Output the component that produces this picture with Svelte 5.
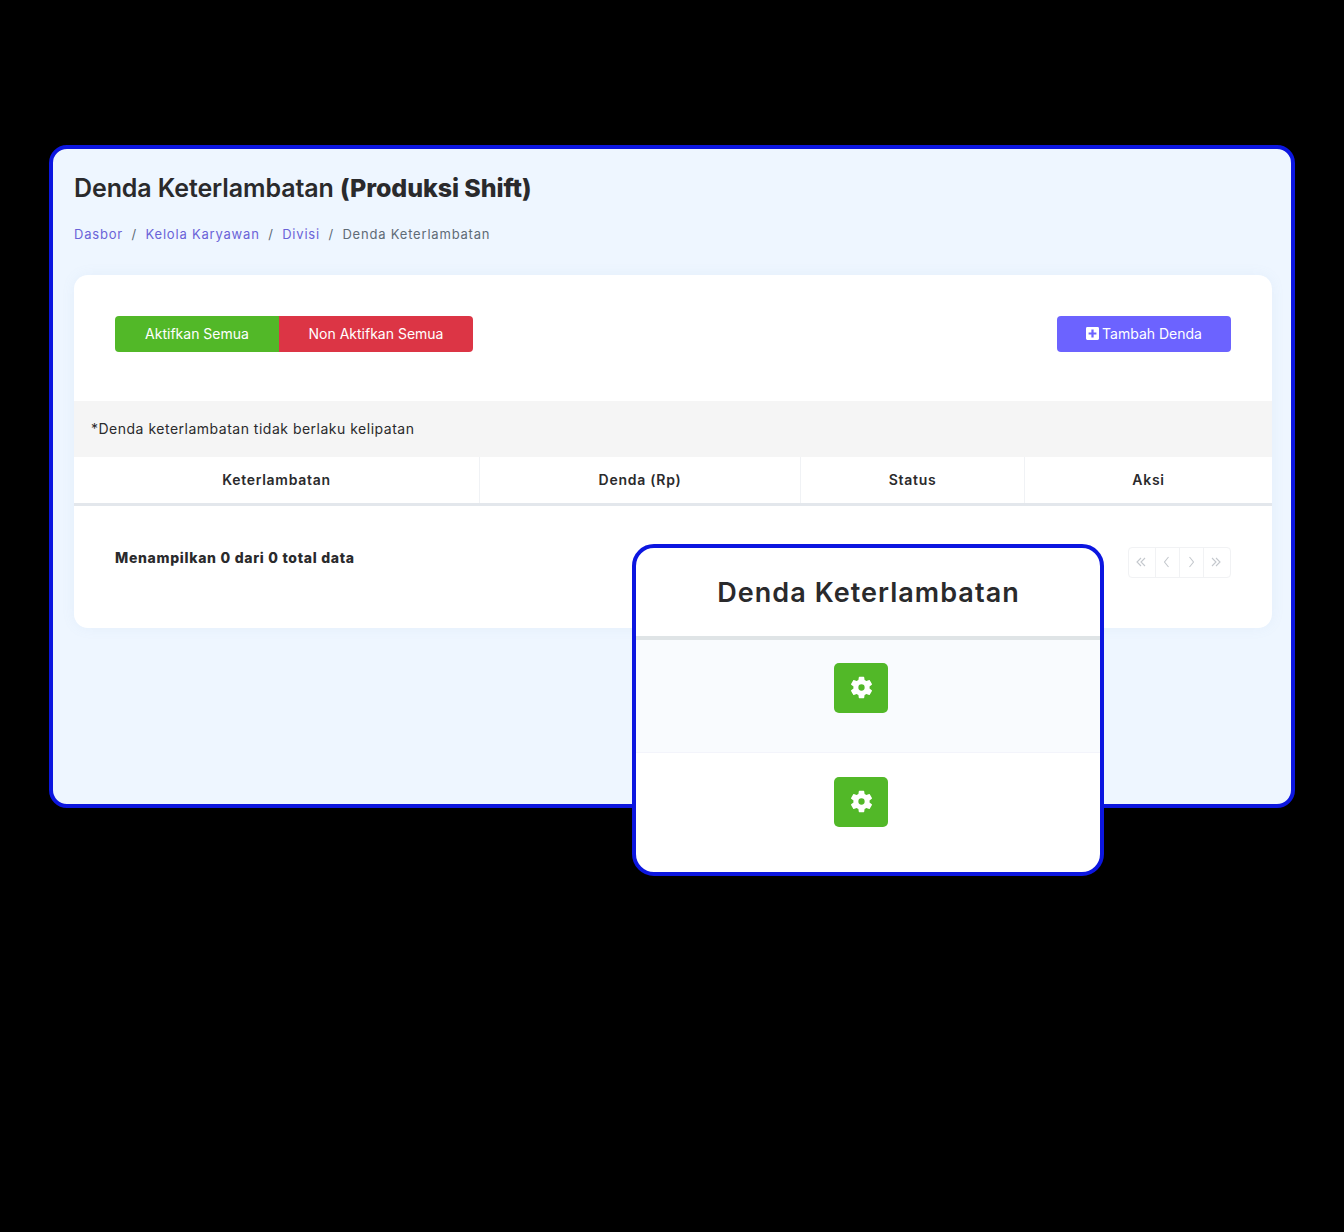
<script>
  const columns = ['Keterlambatan', 'Denda (Rp)', 'Status', 'Aksi'];
  const crumbs = ['Kelola Karyawan', 'Divisi'];
  const pages = [
    'M7 2 3 6l4 4M11 2 7 6l4 4',
    'M8.500 1 4.500 6l4 5',
    'M5.500 1l4 5-4 5',
    'M3 2l4 4-4 4M7 2l4 4-4 4'
  ];
  const gear = 'M19.14 12.94c.04-.3.06-.61.06-.94s-.02-.64-.07-.94l2.03-1.58a.5.5 0 0 0 .12-.61l-1.92-3.32a.5.5 0 0 0-.59-.22l-2.39.96a7 7 0 0 0-1.62-.94l-.36-2.54a.48.48 0 0 0-.48-.41h-3.84a.48.48 0 0 0-.47.41l-.36 2.54c-.59.24-1.13.57-1.62.94l-2.39-.96a.49.49 0 0 0-.59.22L2.74 8.87a.48.48 0 0 0 .12.61l2.03 1.58c-.05.3-.09.63-.09.94s.02.64.07.94l-2.03 1.58a.5.5 0 0 0-.12.61l1.92 3.32c.12.22.37.29.59.22l2.39-.96c.5.38 1.03.7 1.62.94l.36 2.54c.05.24.24.41.48.41h3.84c.24 0 .44-.17.47-.41l.36-2.54c.59-.24 1.13-.56 1.62-.94l2.39.96c.22.08.47 0 .59-.22l1.92-3.32a.48.48 0 0 0-.12-.61l-2.01-1.58zM12 14.800a2.800 2.800 0 1 1 0-5.600 2.800 2.800 0 0 1 0 5.600z';
</script>

<div class="stage">
  <section class="panel">
    <h1>Denda Keterlambatan <b>(Produksi Shift)</b></h1>
    <nav class="crumbs">
      <a href="#top">Dasbor</a>
      {#each crumbs as c}
        <span class="sep">/</span>
        <a href="#top">{c}</a>
      {/each}
      <span class="sep">/</span>
      <span class="current">Denda Keterlambatan</span>
    </nav>

    <div class="card">
      <div class="toolbar">
        <div class="group">
          <button class="btn green">Aktifkan Semua</button>
          <button class="btn red">Non Aktifkan Semua</button>
        </div>
        <button class="btn purple">
          <svg viewBox="0 0 14 14" width="13" height="13" aria-hidden="true">
            <path fill="#fff" fill-rule="evenodd" d="M1.500 0h11A1.500 1.500 0 0 1 14 1.500v11a1.500 1.500 0 0 1-1.500 1.500h-11A1.500 1.500 0 0 1 0 12.500v-11A1.500 1.500 0 0 1 1.500 0zM5.800 2.800v3h-3v2.400h3v3h2.400v-3h3V5.800h-3v-3z" />
          </svg>
          Tambah Denda
        </button>
      </div>

      <p class="note">*Denda keterlambatan tidak berlaku kelipatan</p>

      <div class="thead">
        {#each columns as col}
          <div class="th">{col}</div>
        {/each}
      </div>

      <div class="foot">
        <strong>Menampilkan 0 dari 0 total data</strong>
        <div class="pager">
          {#each pages as d}
            <span>
              <svg viewBox="0 0 14 12" width="14" height="12" aria-hidden="true"><path d={d} fill="none" stroke="#c4c8cd" stroke-width="1.100" /></svg>
            </span>
          {/each}
        </div>
      </div>
    </div>
  </section>

  <section class="popout">
    <h2>Denda Keterlambatan</h2>
    <div class="row tinted">
      <button class="gear" aria-label="Pengaturan">
        <svg viewBox="0 0 24 24" width="27" height="27" aria-hidden="true"><path fill="#fff" d={gear} /></svg>
      </button>
    </div>
    <div class="row second">
      <button class="gear" aria-label="Pengaturan">
        <svg viewBox="0 0 24 24" width="27" height="27" aria-hidden="true"><path fill="#fff" d={gear} /></svg>
      </button>
    </div>
  </section>
</div>

<style>
  :global(body) {
    background: #000;
  }

  .stage {
    position: relative;
    box-sizing: border-box;
    height: 1232px;
    padding: 145px 49px 0;
    font-family: Inter, "Noto Sans", sans-serif;
    color: #2a2a2c;
  }

  .panel {
    box-sizing: border-box;
    height: 663px;
    padding: 23px 19px 0 21px;
    background: #eef6ff;
    border: 4px solid #0c16e0;
    border-radius: 18px;
  }

  h1 {
    margin: 0;
    font-size: 25px;
    line-height: 32px;
    font-weight: 600;
    letter-spacing: -0.1px;
  }

  h1 b {
    font-weight: 800;
  }

  .crumbs {
    display: flex;
    gap: 8.500px;
    margin-top: 20px;
    height: 20px;
    align-items: center;
    font-size: 13px;
    letter-spacing: 0.8px;
  }

  .crumbs a {
    color: #6a63d8;
    text-decoration: none;
  }

  .sep, .current {
    color: #5f6b76;
  }

  .card {
    margin-top: 31px;
    height: 353px;
    background: #fff;
    border-radius: 14px;
    box-shadow: 0 0 14px rgba(120, 150, 200, 0.08);
    overflow: hidden;
  }

  .toolbar {
    display: flex;
    justify-content: space-between;
    padding: 41px 41px 49px;
  }

  .group {
    display: flex;
  }

  .btn {
    height: 36px;
    border: 0;
    padding: 0 0 2px;
    color: #fff;
    font: 400 14px Inter, "Noto Sans", sans-serif;
  }

  .green {
    width: 164px;
    background: #52b828;
    border-radius: 4px 0 0 4px;
  }

  .red {
    width: 194px;
    background: #dc3545;
    border-radius: 0 4px 4px 0;
  }

  .purple {
    width: 174px;
    display: flex;
    align-items: center;
    justify-content: center;
    gap: 3px;
    background: #6c63ff;
    border-radius: 4px;
  }

  .note {
    margin: 0;
    height: 56px;
    box-sizing: border-box;
    padding: 0 0 1px 17px;
    display: flex;
    align-items: center;
    background: #f5f5f5;
    font-size: 14px;
    letter-spacing: 0.5px;
  }

  .thead {
    display: grid;
    grid-template-columns: 406px 321px 224px 1fr;
    height: 46px;
    border-bottom: 3px solid #e3e7ec;
  }

  .th {
    display: flex;
    align-items: center;
    justify-content: center;
    padding-bottom: 1px;
    font-size: 14px;
    font-weight: 600;
    letter-spacing: 0.72px;
    border-right: 1px solid #f0f2f5;
  }

  .th:last-child {
    border-right: 0;
  }

  .foot {
    display: flex;
    justify-content: space-between;
    align-items: flex-start;
    padding: 41px 41px 0;
  }

  .foot strong {
    font-size: 14px;
    font-weight: 800;
    line-height: 22px;
    letter-spacing: 0.7px;
  }

  .pager {
    display: grid;
    grid-template-columns: 26px 24px 24px 1fr;
    height: 31px;
    border: 1px solid #f1f2f4;
    border-radius: 4px;
    box-sizing: border-box;
    width: 103px;
  }

  .pager span {
    display: flex;
    align-items: center;
    justify-content: center;
    padding: 0 2px 1px 0;
    border-left: 1px solid #f1f2f4;
  }

  .pager span:first-child {
    border-left: 0;
  }

  .popout {
    position: absolute;
    left: 632px;
    top: 544px;
    box-sizing: border-box;
    width: 472px;
    height: 332px;
    background: #fff;
    border: 4px solid #0c16e0;
    border-radius: 22px;
    overflow: hidden;
  }

  h2 {
    margin: 0;
    height: 92px;
    box-sizing: border-box;
    border-bottom: 4px solid #dfe4e6;
    text-align: center;
    font-size: 27px;
    line-height: 89px;
    font-weight: 600;
    letter-spacing: 1.050px;
    padding-left: 1px;
  }

  .row {
    height: 113px;
    box-sizing: border-box;
    padding: 23px 0 0 198px;
  }

  .second {
    padding-top: 24px;
  }

  .tinted {
    background: #f9fbfe;
    border-bottom: 1px solid #f3f4fb;
  }

  .gear {
    width: 54px;
    height: 50px;
    border: 0;
    padding: 0 0 2px;
    border-radius: 5px;
    background: #52b828;
    display: flex;
    align-items: center;
    justify-content: center;
  }
</style>
